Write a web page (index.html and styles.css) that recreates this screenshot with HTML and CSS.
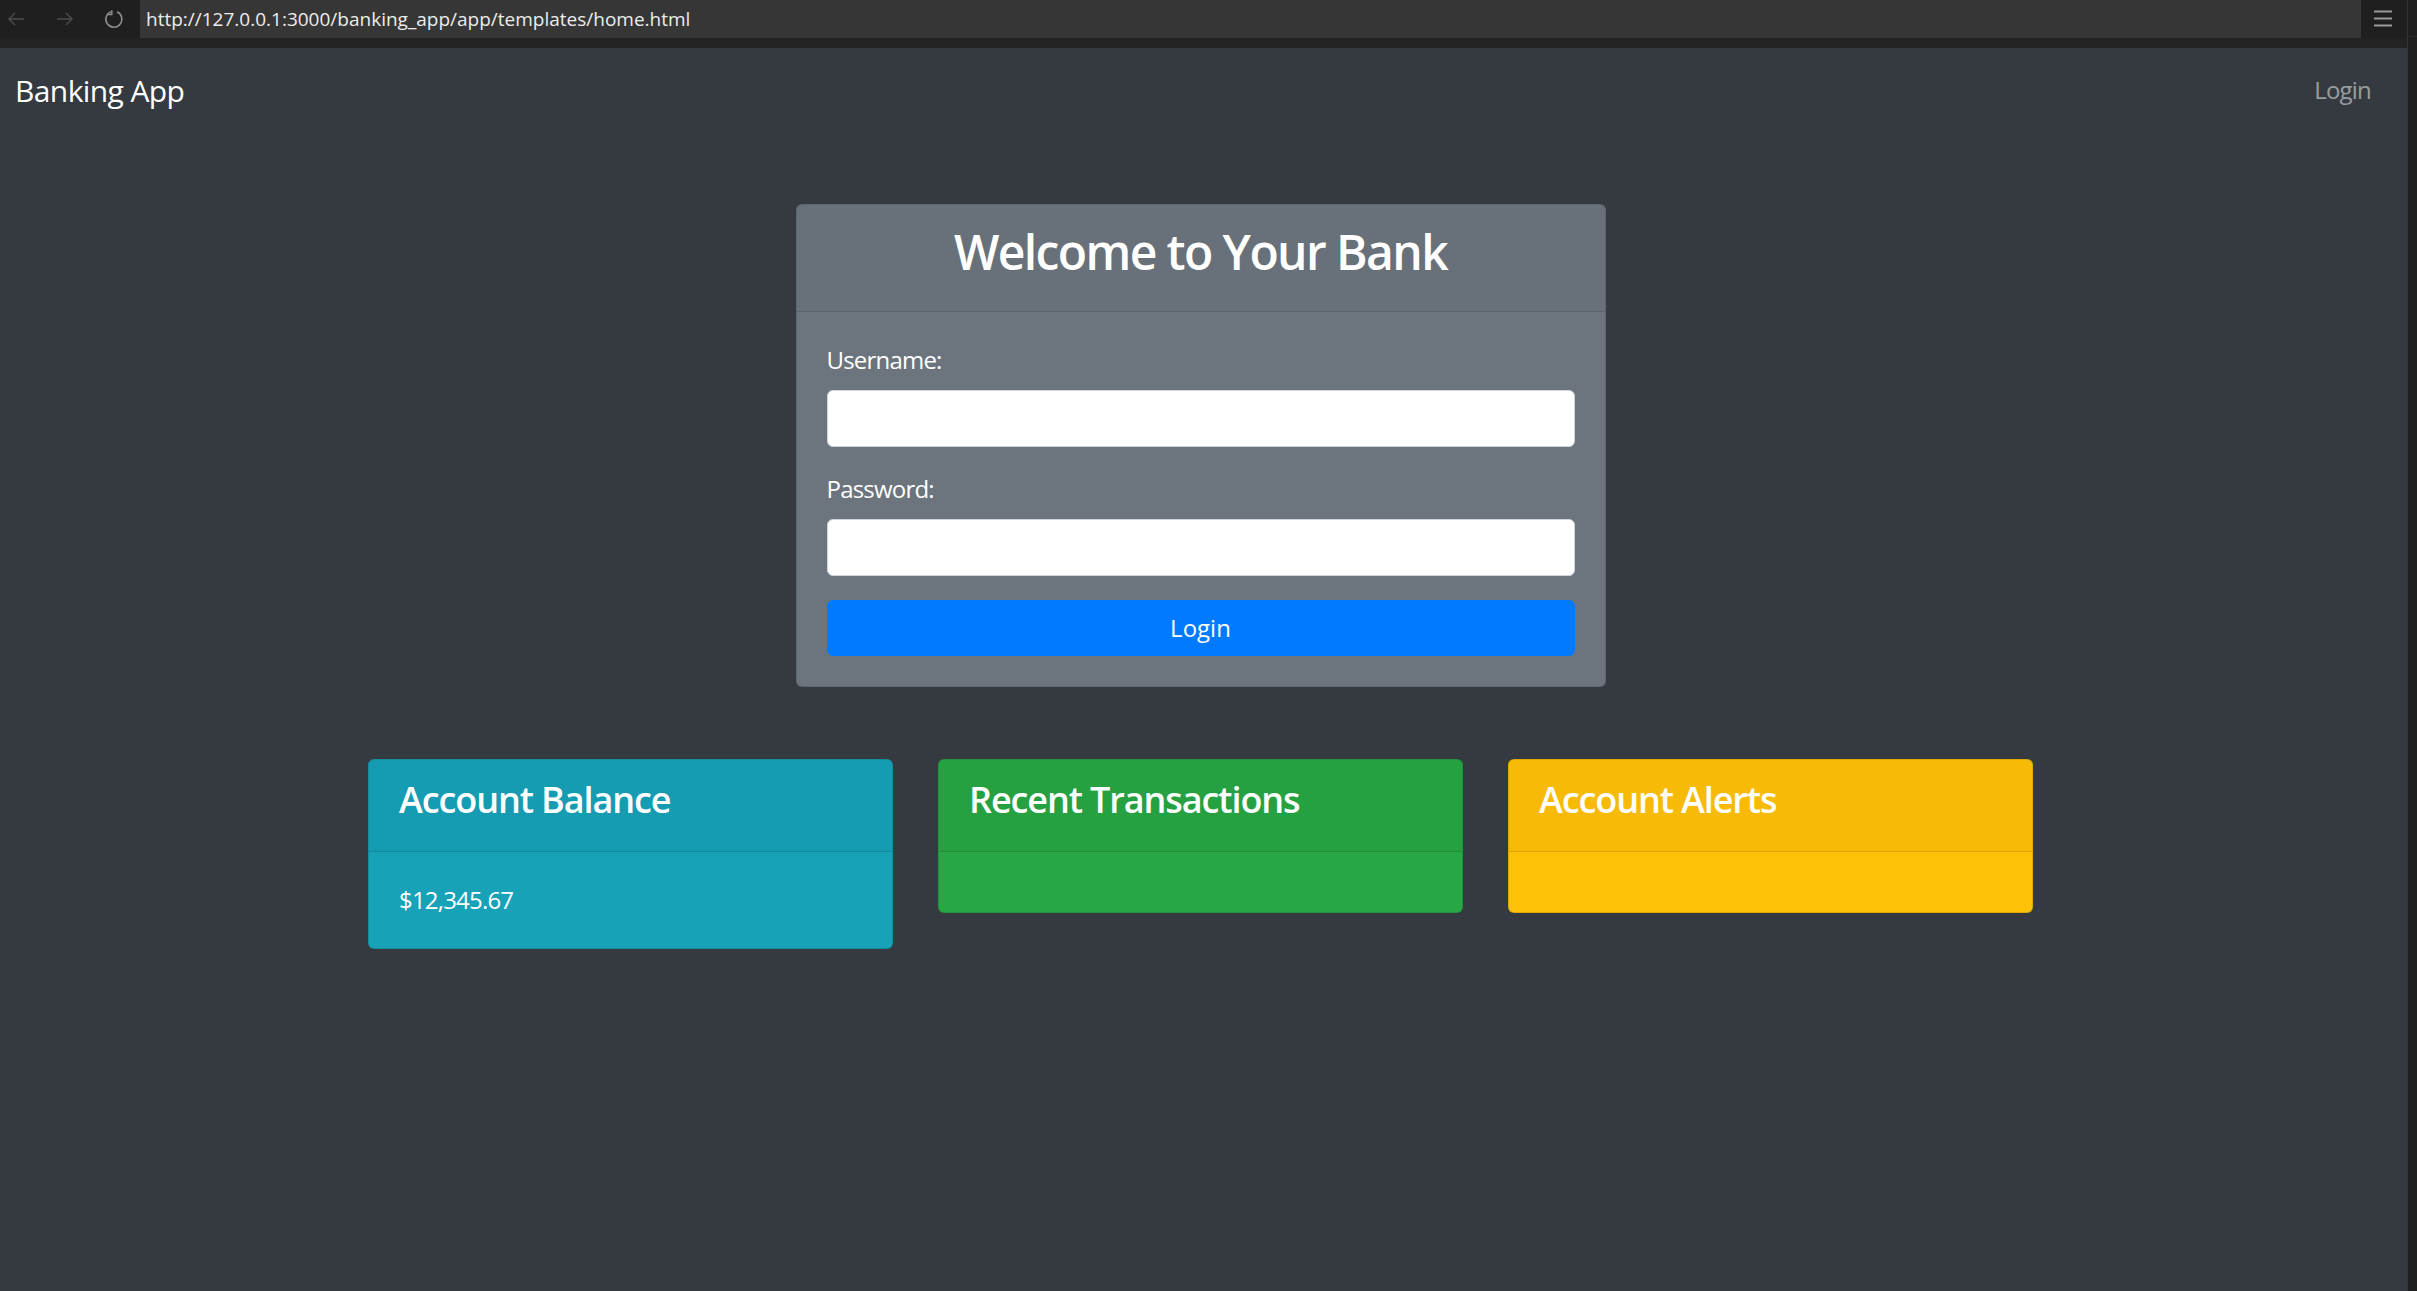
FILE: index.html
```html
<!DOCTYPE html>
<html lang="en">
<head>
<meta charset="utf-8">
<title>Banking App</title>
<link rel="stylesheet" href="styles.css">
</head>
<body>
<div class="window">
  <div class="viewport">
    <header class="chrome">
      <div class="chrome-bar">
        <div class="nav-buttons">
          <svg class="icon dim" width="20" height="20" viewBox="0 0 20 20"><path d="M18 10H3M9 4L3 10l6 6" fill="none" stroke="currentColor" stroke-width="1.4"/></svg>
          <svg class="icon dim" width="20" height="20" viewBox="0 0 20 20"><path d="M2 10h15M11 4l6 6-6 6" fill="none" stroke="currentColor" stroke-width="1.4"/></svg>
          <svg class="icon lit" width="20" height="20" viewBox="0 0 20 20"><path d="M7.2 2.6A8 8 0 1 0 13 2.8" fill="none" stroke="currentColor" stroke-width="1.5"/><path d="M7.8 1.2v4.2H3.6" fill="none" stroke="currentColor" stroke-width="1.5"/></svg>
        </div>
        <div class="address">http://127.0.0.1:3000/banking_app/app/templates/home.html</div>
        <div class="menu">
          <svg width="18" height="18" viewBox="0 0 18 18"><path d="M0 1.5h18M0 8.5h18M0 15.5h18" stroke="currentColor" stroke-width="2"/></svg>
        </div>
      </div>
      <div class="chrome-strip"></div>
    </header>

    <div class="page">
      <nav class="navbar">
        <a class="brand" href="#">Banking App</a>
        <a class="nav-link" href="#">Login</a>
      </nav>

      <div class="main-wrap">
        <main class="container">
          <div class="row row-center">
            <div class="col-6">
              <div class="card card-secondary">
                <div class="card-header">
                  <h2 class="welcome">Welcome to Your Bank</h2>
                </div>
                <div class="card-body">
                  <form class="login-form">
                    <div class="form-group">
                      <label class="label" for="username">Username:</label>
                      <input class="form-control" id="username" type="text">
                    </div>
                    <div class="form-group">
                      <label class="label" for="password">Password:</label>
                      <input class="form-control" id="password" type="password">
                    </div>
                    <button class="btn-primary" type="button">Login</button>
                  </form>
                </div>
              </div>
            </div>
          </div>

          <div class="row row-cards">
            <div class="col-4">
              <div class="card card-info">
                <div class="card-header"><h4 class="card-title">Account Balance</h4></div>
                <div class="card-body"><p class="amount">$12,345.67</p></div>
              </div>
            </div>
            <div class="col-4">
              <div class="card card-success">
                <div class="card-header"><h4 class="card-title">Recent Transactions</h4></div>
                <div class="card-body"></div>
              </div>
            </div>
            <div class="col-4">
              <div class="card card-warning">
                <div class="card-header"><h4 class="card-title">Account Alerts</h4></div>
                <div class="card-body"></div>
              </div>
            </div>
          </div>
        </main>
      </div>
    </div>
  </div>
  <div class="scrollbar"><div class="scroll-top"></div></div>
</div>
</body>
</html>
```

FILE: styles.css
```css
* {
  box-sizing: border-box;
}

html, body {
  margin: 0;
  padding: 0;
  height: 100%;
}

body {
  font-family: "Open Sans", "Noto Sans", sans-serif;
  font-size: 24px;
  line-height: 1.5;
  letter-spacing: -0.8px;
  color: #fff;
  background: #343a40;
  overflow: hidden;
}

.window {
  display: flex;
  height: 100vh;
}

.viewport {
  flex: 1;
  display: flex;
  flex-direction: column;
  min-width: 0;
}

/* ---------- browser chrome ---------- */
.chrome {
  height: 48px;
  background: #212121;
  flex: none;
}

.chrome-bar {
  display: flex;
  height: 38px;
}

.nav-buttons {
  width: 140px;
  display: flex;
  align-items: center;
  gap: 29px;
  padding-left: 6px;
  background: #1f1f1f;
}

.icon.dim {
  color: #4d4d4d;
}

.icon.lit {
  color: #8e8e8e;
}

.address {
  flex: 1;
  background: #363636;
  color: #ececec;
  font-size: 19px;
  line-height: 38px;
  padding-left: 6px;
  letter-spacing: 0;
  white-space: nowrap;
}

.menu {
  width: 46px;
  display: flex;
  align-items: center;
  justify-content: center;
  color: #9a9a9a;
  background: #1f1f1f;
  padding-right: 2px;
}

.chrome-strip {
  height: 10px;
  background: #232323;
}

.scrollbar {
  width: 10px;
  flex: none;
  background: #1e1e1e;
  border-left: 1px solid #333;
}

.scroll-top {
  height: 37px;
  border-bottom: 1px solid #2e2e2e;
}

/* ---------- page ---------- */
.page {
  flex: 1;
}

.navbar {
  display: flex;
  justify-content: space-between;
  align-items: center;
  padding: 12px 24px 12px 15px;
}

.brand {
  font-size: 30px;
  line-height: 45px;
  padding: 7.5px 0;
  letter-spacing: -0.6px;
  color: #fff;
  text-decoration: none;
}

.nav-link {
  padding: 12px;
  line-height: 36px;
  color: rgba(255, 255, 255, 0.5);
  text-decoration: none;
}

.main-wrap {
  padding-right: 6px;
}

.container {
  width: 1710px;
  margin: 72px auto 0;
  padding: 0 22.5px;
}

.row {
  display: flex;
  margin: 0 -22.5px;
}

.row-center {
  justify-content: center;
}

.row-cards {
  margin-top: 72px;
  align-items: flex-start;
}

.col-6 {
  width: 855px;
  padding: 0 22.5px;
}

.col-4 {
  width: 570px;
  padding: 0 22.5px;
}

/* ---------- cards ---------- */
.card {
  border: 1px solid rgba(0, 0, 0, 0.125);
  border-radius: 6px;
  overflow: hidden;
}

.card-secondary { background: #6c757d; }
.card-info { background: #17a2b8; }
.card-success { background: #28a745; }
.card-warning { background: #ffc107; }

.card-header {
  padding: 18px 30px;
  background: rgba(0, 0, 0, 0.03);
  border-bottom: 1px solid rgba(0, 0, 0, 0.125);
}

.card-body {
  padding: 30px;
  min-height: 60px;
}

.welcome {
  margin: 0 0 12px;
  font-size: 48px;
  line-height: 1.2;
  font-weight: 600;
  letter-spacing: -1.6px;
  text-align: center;
}

.card-title {
  margin: 0 0 12px;
  font-size: 36px;
  line-height: 1.2;
  font-weight: 600;
  letter-spacing: -1.1px;
}

.amount {
  margin: 0;
}

.form-group {
  margin-bottom: 24px;
}

.label {
  display: inline-block;
  margin-bottom: 12px;
}

.form-control {
  display: block;
  width: 100%;
  height: 57px;
  padding: 9px 18px;
  font: inherit;
  background: #fff;
  border: 1px solid #ced4da;
  border-radius: 6px;
}

.btn-primary {
  display: block;
  width: 100%;
  height: 56px;
  font: inherit;
  color: #fff;
  background: #007bff;
  border: 1px solid #007bff;
  border-radius: 6px;
  padding: 0;
}
```
